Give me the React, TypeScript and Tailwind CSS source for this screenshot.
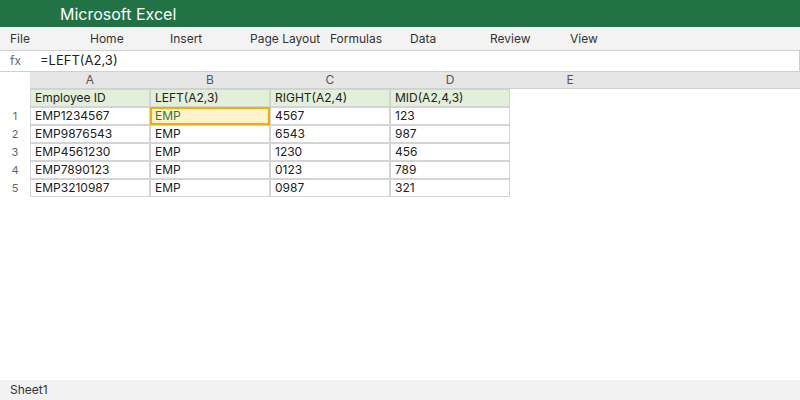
import React from "react";

const menu = ["File", "Home", "Insert", "Page Layout", "Formulas", "Data", "Review", "View"];
const cols = ["A", "B", "C", "D", "E"];
const header = ["Employee ID", "LEFT(A2,3)", "RIGHT(A2,4)", "MID(A2,4,3)"];
const rows = [
  ["EMP1234567", "EMP", "4567", "123"],
  ["EMP9876543", "EMP", "6543", "987"],
  ["EMP4561230", "EMP", "1230", "456"],
  ["EMP7890123", "EMP", "0123", "789"],
  ["EMP3210987", "EMP", "0987", "321"],
];

export default function App() {
  return (
    <div
      className="w-[800px] h-[400px] flex flex-col bg-white overflow-hidden text-[#222]"
      style={{ fontFamily: "Inter, 'Noto Sans', sans-serif" }}
    >
      <div className="h-[27px] bg-[#217346] flex items-center pl-[60px] text-white text-[16px] shrink-0">
        Microsoft Excel
      </div>
      <div className="h-[23px] bg-[#f3f3f3] flex items-center pl-[10px] text-[12px] text-[#333] shrink-0">
        {menu.map((m) => (
          <div key={m} className="w-[80px] shrink-0 whitespace-nowrap">
            {m}
          </div>
        ))}
      </div>
      <div className="h-[22px] border-y border-r border-[#d0d0d0] flex items-center shrink-0 bg-white">
        <div className="w-[30px] pl-[10px] text-[12px] text-[#666]">fx</div>
        <div className="pl-[10px] text-[13px] text-[#222]">=LEFT(A2,3)</div>
      </div>
      <div className="h-[17px] flex shrink-0">
        <div className="w-[30px] bg-white" />
        <div className="flex-1 flex bg-[#e6e6e6] border-b border-[#d0d0d0]">
          {cols.map((c) => (
            <div key={c} className="w-[120px] text-center text-[12px] leading-[16px] text-[#555]">
              {c}
            </div>
          ))}
        </div>
      </div>
      <div className="flex flex-col flex-1">
        <div className="flex h-[18px]">
          <div className="w-[30px]" />
          {header.map((h) => (
            <div
              key={h}
              className="w-[120px] border border-[#d4d4d4] bg-[#e2efda] pl-[4px] text-[12px] leading-[16px] text-[#222]"
            >
              {h}
            </div>
          ))}
        </div>
        {rows.map((r, i) => (
          <div key={i} className="flex h-[18px]">
            <div className="w-[30px] text-center text-[11px] leading-[18px] text-[#666]">{i + 1}</div>
            {r.map((v, j) =>
              i === 0 && j === 1 ? (
                <div
                  key={j}
                  className="w-[120px] border-2 border-[#f0b000] bg-[#fff2cc] pl-[3px] text-[12px] leading-[14px] text-[#2e7d32]"
                >
                  {v}
                </div>
              ) : (
                <div
                  key={j}
                  className="w-[120px] border border-[#d4d4d4] bg-white pl-[4px] text-[12px] leading-[16px] text-[#222]"
                >
                  {v}
                </div>
              )
            )}
          </div>
        ))}
      </div>
      <div className="h-[20px] bg-[#f2f2f2] flex items-center pl-[10px] text-[12px] text-[#333] shrink-0">
        Sheet1
      </div>
    </div>
  );
}
